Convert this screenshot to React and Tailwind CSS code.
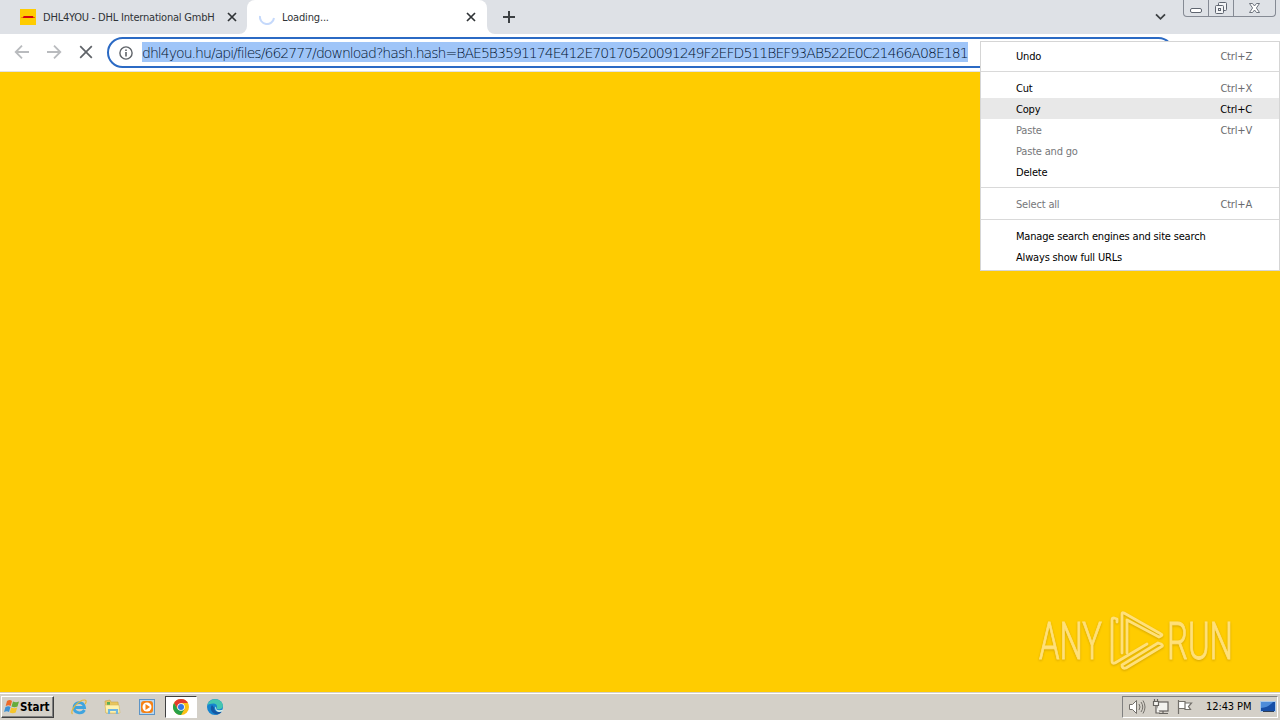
const menuGroups = [
  [{ label: "Undo", keys: "Ctrl+Z" }],
  [
    { label: "Cut", keys: "Ctrl+X" },
    { label: "Copy", keys: "Ctrl+C", active: true },
    { label: "Paste", keys: "Ctrl+V", disabled: true },
    { label: "Paste and go", disabled: true },
    { label: "Delete" },
  ],
  [{ label: "Select all", keys: "Ctrl+A", disabled: true }],
  [
    { label: "Manage search engines and site search" },
    { label: "Always show full URLs" },
  ],
];

function CloseIcon({ className }) {
  return (
    <svg viewBox="0 0 10 10" className={className} fill="none" stroke="currentColor" strokeWidth="1.7">
      <path d="M1 1l8 8M9 1L1 9" />
    </svg>
  );
}

function WindowControls() {
  return (
    <div className="flex h-[17px] w-[93px] rounded-b-[4px] border border-t-0 border-[#858a94] text-[#5f6570]">
      <div className="flex w-[25px] justify-center border-r border-[#858a94]">
        <svg width="14" height="16" fill="#fff" stroke="currentColor">
          <rect x="1.5" y="8.5" width="11" height="4" rx="1.5" />
        </svg>
      </div>
      <div className="flex w-[25px] justify-center border-r border-[#858a94]">
        <svg width="14" height="16" fill="#f3f4f6" stroke="currentColor">
          <rect x="4.5" y="2.5" width="8" height="8" rx="1" />
          <rect x="1.5" y="5.5" width="8" height="8" rx="1" />
          <rect x="4.5" y="8.5" width="2" height="2" />
        </svg>
      </div>
      <div className="flex flex-1 justify-center">
        <svg width="13" height="16" fill="#fff" stroke="currentColor" strokeWidth="0.9">
          <path d="M1.5 3.5h3l2 2.5 2-2.5h3L8.4 8l3.1 4.5h-3l-2-2.5-2 2.5h-3L4.600 8z" />
        </svg>
      </div>
    </div>
  );
}

function TabStrip() {
  return (
    <div className="flex h-[34px] bg-[#dee1e6] text-[11px] text-[#2f3336]">
      <div className="flex w-[247px] items-center pl-5">
        <svg width="16" height="16" viewBox="0 0 16 16">
          <path fill="#ffcc00" d="M0 0h16v16H0z" />
          <path fill="#d40511" d="M1 8.7l2-.2.6-1.500h9.800l-.5 1.300 2.100.2v.5H1z" />
        </svg>
        <span className="mt-[2px] ml-[7px] w-[185px] whitespace-nowrap tracking-[-0.21px]">
          DHL4YOU - DHL International GmbH
        </span>
        <CloseIcon className="-ml-px h-[10px] w-[10px]" />
      </div>
      <div className="relative flex w-[240px] items-center rounded-t-[8px] bg-white pl-3">
        <div className="absolute bottom-0 -left-2 h-2 w-2 overflow-hidden bg-white">
          <div className="h-2 w-2 rounded-br-[8px] bg-[#dee1e6]" />
        </div>
        <div className="absolute -right-2 bottom-0 h-2 w-2 bg-white">
          <div className="h-2 w-2 rounded-bl-[8px] bg-[#dee1e6]" />
        </div>
        <svg width="16" height="16" fill="none" stroke="#c5d9fb" strokeWidth="2">
          <path d="M1 7a7 7 0 0 0 14 2" />
        </svg>
        <span className="mt-[2px] ml-[7px] w-[184px] tracking-[-0.16px]">Loading...</span>
        <CloseIcon className="h-[10px] w-[10px]" />
      </div>
      <svg width="12" height="12" className="mt-[11px] ml-4" stroke="#3c4043" strokeWidth="2">
        <path d="M6 0v12M0 6h12" />
      </svg>
      <div className="ml-auto flex">
        <svg width="11" height="8" className="mt-[13px] mr-[17px]" fill="none" stroke="#3c4043" strokeWidth="1.8">
          <path d="M1 1.3l4.5 4.5L10 1.3" />
        </svg>
        <WindowControls />
        <div className="w-[4px]" />
      </div>
    </div>
  );
}

function Toolbar() {
  return (
    <div className="flex h-[38px] items-start border-b border-[#e2e2e4] bg-white">
      <div className="flex h-[36px] w-[107px] items-center">
        <svg width="16" height="16" className="ml-[14px]" fill="none" stroke="#b9bbbe" strokeWidth="1.8">
          <path d="M15 8H2M8 1.7L1.7 8 8 14.3" />
        </svg>
        <svg width="16" height="16" className="ml-4" fill="none" stroke="#b9bbbe" strokeWidth="1.8">
          <path d="M1 8h13M8 1.7L14.3 8 8 14.3" />
        </svg>
        <svg width="14" height="14" className="ml-[17px]" fill="none" stroke="#5f6368" strokeWidth="1.7">
          <path d="M1.2 1.2l11.6 11.6M12.8 1.2L1.2 12.8" />
        </svg>
      </div>
      <div className="mt-[3px] flex h-[31px] w-[1067px] items-center rounded-full border-2 border-[#2b6ac4] pl-[10px]">
        <svg width="14" height="14" className="mr-[9px] shrink-0" fill="none" stroke="#5f6368" strokeWidth="1.4">
          <circle cx="7" cy="7" r="6.1" />
          <path d="M7 6v4.6M7 3.4v1.5" strokeWidth="1.6" />
        </svg>
        <span className="-mt-px h-5 bg-[#9fc5f8] font-['DejaVu_Sans','DejaVu_Sans_Light',sans-serif] text-[14px] leading-[22px] font-extralight tracking-[-0.96px] whitespace-nowrap text-[#00122e]">
          dhl4you.hu/api/files/662777/download?hash.hash=BAE5B3591174E412E70170520091249F2EFD511BEF93AB522E0C21466A08E181
        </span>
      </div>
    </div>
  );
}

function MenuItem({ label, keys, active, disabled }) {
  return (
    <div
      className={`flex h-[21px] justify-between pr-[27px] pl-[35px] leading-[23px] whitespace-nowrap ${
        active ? "bg-[#e8e8e8]" : ""
      } ${disabled ? "text-[#76777a]" : "text-black"}`}
    >
      <span>{label}</span>
      {keys && <span className={active ? "" : "text-[#6a6b6e]"}>{keys}</span>}
    </div>
  );
}

function ContextMenu() {
  return (
    <div className="absolute top-[41px] left-[980px] h-[230px] w-[300px] border border-[#d5d5d5] bg-white pt-[3px] text-[11px] tracking-[-0.18px]">
      {menuGroups.map((group, i) => (
        <div key={i}>
          {i > 0 && (
            <div className="flex h-[11px] items-center">
              <div className="h-px w-full bg-[#d9d9d9]" />
            </div>
          )}
          {group.map((item) => (
            <MenuItem key={item.label} {...item} />
          ))}
        </div>
      ))}
    </div>
  );
}

function Watermark() {
  return (
    <svg
      width="220"
      height="80"
      viewBox="0 0 220 80"
      className="absolute top-[606px] left-[1035px] overflow-visible drop-shadow-[0_1px_1px_rgba(150,110,0,0.4)]"
    >
      <g fill="#ffe07a" stroke="#ffe07a" strokeWidth="1" className="font-['Roboto',sans-serif] text-[52px] font-light">
        <text x="4" y="53" textLength="63" lengthAdjust="spacingAndGlyphs">ANY</text>
        <text x="132" y="53" textLength="66" lengthAdjust="spacingAndGlyphs">RUN</text>
      </g>
      <g
        transform="translate(65 -2)"
        fill="none"
        stroke="#ffe07a"
        strokeWidth="2.8"
        strokeLinejoin="round"
        strokeLinecap="round"
      >
        <path d="M22 49V10q0-2 2-1l37 21q2 1 0 2l-2 1-32-17v33" />
        <path d="M17 18v-3l-3-1q-2 0-2 2v41q0 3 3 2l32-19" />
        <path d="M22 62q1 3 4 2l35-21q3-1 0-3l-3-1-36 22" />
      </g>
    </svg>
  );
}

function ExplorerIcon() {
  return (
    <svg width="18" height="18" viewBox="0 0 18 18">
      <path fill="#e9c65d" stroke="#c9a44a" strokeWidth=".6" d="M1 3l5-1 1 2h7l1 11H2z" />
      <path fill="#5cae54" d="M3 4h3v3H3z" />
      <path fill="#fff3ad" stroke="#d9b75b" strokeWidth=".6" d="M1 7h14l1 8H2z" />
      <path fill="none" stroke="#70b6df" strokeWidth="2.2" d="M5 16v-4h8v4" />
    </svg>
  );
}

function EdgeIcon() {
  return (
    <svg width="18" height="18" viewBox="0 0 18 18">
      <circle cx="9" cy="9" r="8" fill="#1684ce" />
      <path fill="#45c6b0" d="M1.5 7C3 2 7 .8 10 1.2c5 .6 8 5 6.5 8.2-1 2-5 2.3-6 1 1-1 1-5-3-5-3 0-5 1-6 1.6z" />
      <path fill="#1557a3" d="M6 7c-3 4 0 9 5 9.5 2-.5 4-1.5 5-3-4 1.5-8 0-8-4z" />
      <path fill="#d3ece9" d="M9.500 8.500c1 1 .5 2 1 3 1.500 1 4 .8 7 0l-1.500 2c-3 1.500-8-.5-6.500-5z" />
    </svg>
  );
}

function TaskIcons() {
  return (
    <>
      <svg width="18" height="18" viewBox="0 0 18 18" className="ml-[16px]" fill="none">
        <path d="M14.500 12c-2.500 4.500-10.500 3.500-10.500-2.500s9.500-7 10.500 0H5" stroke="#3fa4df" strokeWidth="2.8" />
        <path d="M2.500 16C-1 13 9 1.500 15 2c2 .5 1 3 0 4" stroke="#e5b73c" strokeWidth="1.2" />
      </svg>
      <div className="ml-4">
        <ExplorerIcon />
      </div>
      <svg width="18" height="18" viewBox="0 0 18 18" className="ml-4">
        <rect x="1.5" y="1.5" width="15" height="15" fill="#b9d8f1" stroke="#5d94c5" />
        <rect x="3" y="3" width="12" height="12" rx="3" fill="#f58216" />
        <circle cx="9" cy="9" r="4.5" fill="#fff" />
        <path fill="#f58216" d="M7.500 6l4.500 3-4.500 3z" />
      </svg>
      <div className="ml-[9px] flex h-[22px] w-[32px] items-center justify-center border border-t-[#404040] border-r-white border-b-white border-l-[#404040] bg-white">
        <svg width="16" height="16" viewBox="0 0 16 16">
          <circle cx="8" cy="8" r="8" fill="#fbc116" />
          <path fill="#e33b2e" d="M1.07 4a8 8 0 0 1 13.860 0H8L4.540 10z" />
          <path fill="#28a148" d="M1.07 4a8 8 0 0 0 6.930 12l3.460-6-6.920 0z" />
          <circle cx="8" cy="8" r="3.8" fill="#fff" />
          <circle cx="8" cy="8" r="3" fill="#3478e5" />
        </svg>
      </div>
      <div className="ml-[9px]">
        <EdgeIcon />
      </div>
    </>
  );
}

function Tray() {
  return (
    <div className="ml-auto flex h-[22px] w-[156px] items-center border border-t-[#808080] border-r-white border-b-white border-l-[#808080] pl-[5px]">
      <svg width="18" height="18" fill="#fff" stroke="#73706b" strokeWidth="1">
        <path d="M1.5 6.5h3l4-4v13l-4-4h-3z" />
        <path d="M11 6q2 3 0 6M13 4q3.5 5 0 10M15 2.5q4 6.5 0 13" fill="none" />
      </svg>
      <svg width="18" height="18" className="ml-[6px]" fill="#f4f3ef" stroke="#66635f" strokeWidth="1.2">
        <rect x="5" y="4" width="11" height="9" />
        <path d="M7 15.5h9M11 13v2" />
        <path d="M1.5 3.5h5v4h-5zM2.5 1v3M5.5 1v3M4 7v8h4" />
      </svg>
      <svg width="18" height="18" className="ml-[6px]" fill="#fff" stroke="#73706b" strokeWidth="1.2">
        <path d="M2.5 16V2M3 3.5h6v7H3M9 5h6.500l-3 3.500 2 3H9z" />
      </svg>
      <span className="mt-[2px] ml-[12px] w-[48px] text-[11px] tracking-[-0.1px] whitespace-nowrap text-black">
        12:43 PM
      </span>
      <svg width="16" height="16" className="ml-[6px]">
        <path fill="#a9c8e9" d="M0 2h16v11H0z" />
        <path fill="#174fa7" d="M1 3h14v9H1z" />
        <path fill="#4d8cda" d="M1 3h12Q8 9 1 9z" />
        <path fill="#303f55" d="M3 12h11v1H3z" />
      </svg>
    </div>
  );
}

function Taskbar() {
  return (
    <div className="flex h-[28px] items-center border-t border-[#d4d0c8] bg-[#d4d0c8] pr-[2px] shadow-[inset_0_1px_0_#fff]">
      <div className="ml-[1px] flex h-[22px] w-[53px] items-center border border-t-white border-r-[#404040] border-b-[#404040] border-l-white pl-[2px] shadow-[inset_-1px_-1px_0_#808080]">
        <svg width="16" height="16" viewBox="0 0 16 16">
          <path fill="#ed6a29" d="M3 2q3-2 5 0L6.7 7q-2-1.5-5 0z" />
          <path fill="#65ac3b" d="M9 2.5q3 1.5 6 0l-1.500 5q-3 1.500-6 0z" />
          <path fill="#3d91d5" d="M1.5 8q3-1.5 5 0L5 13q-2-1.5-5 0z" />
          <path fill="#f5c52c" d="M7.2 8.5q3 1.5 6 0l-1.500 5q-3 1.500-6 0z" />
        </svg>
        <span className="mt-[2px] text-[11.5px] font-bold text-black">Start</span>
      </div>
      <TaskIcons />
      <Tray />
    </div>
  );
}

function App() {
  return (
    <div className="relative flex h-[720px] w-[1280px] flex-col overflow-hidden bg-[#ffcc00] font-['DejaVu_Sans_Condensed','DejaVu_Sans',sans-serif]">
      <TabStrip />
      <Toolbar />
      <main className="flex-1" />
      <Taskbar />
      <ContextMenu />
      <Watermark />
    </div>
  );
}

export default App;
